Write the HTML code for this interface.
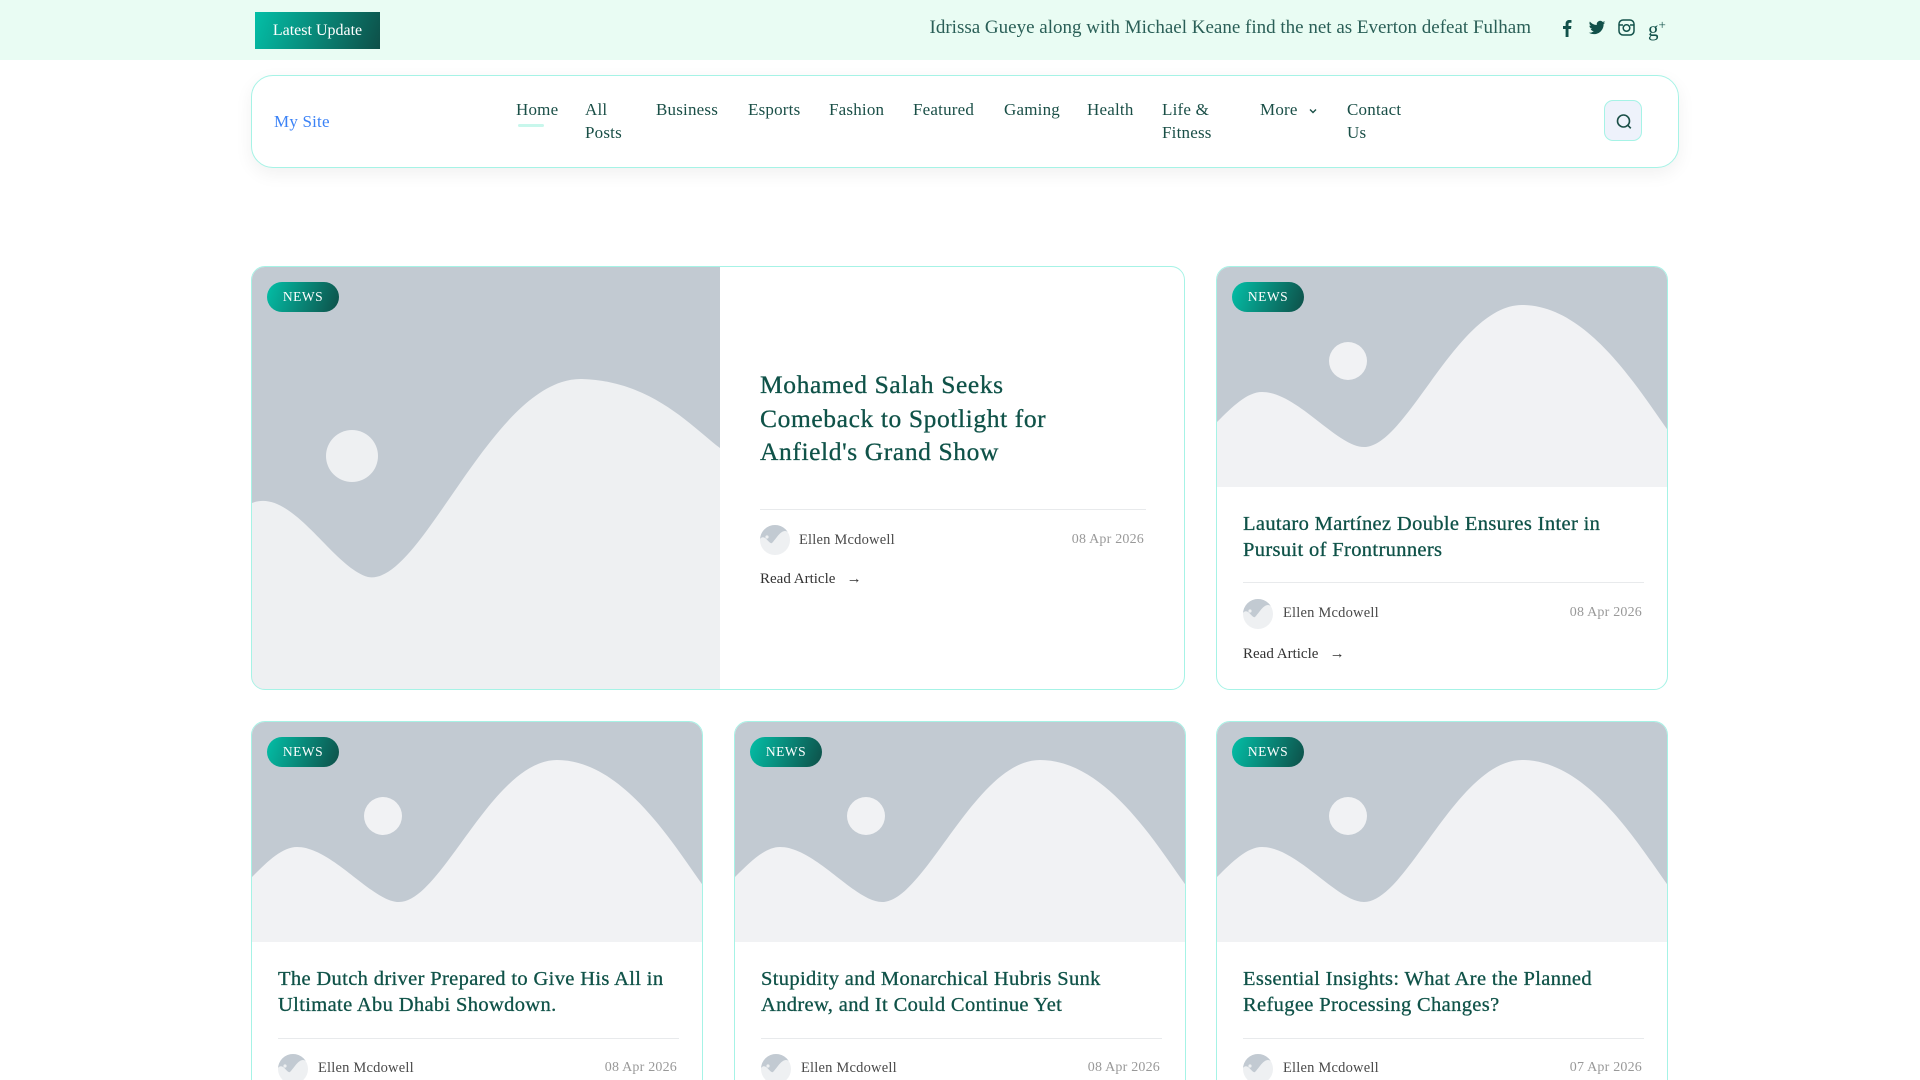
<!DOCTYPE html>
<html><head><meta charset="utf-8"><style>
*{margin:0;padding:0;box-sizing:border-box}
html,body{width:1920px;height:1080px;overflow:hidden}
body{background:#fff;font-family:"Liberation Serif",serif;color:#164e45;position:relative}
.top{position:absolute;left:0;top:0;width:1920px;height:60px;background:#e9fcf3}
.btn{position:absolute;left:255px;top:12px;width:125px;height:37px;background:linear-gradient(110deg,#03bfa7,#0e4f48);color:#fff;font-size:16px;line-height:37px;text-align:center}
.tick{position:absolute;right:389px;top:17px;font-size:19px;color:#2a5f57;white-space:nowrap}
.soc{position:absolute;top:19px}
.nav{position:absolute;left:251px;top:75px;width:1428px;height:93px;border:1.5px solid #a6f3e6;border-radius:22px;background:#fff;box-shadow:0 6px 18px rgba(0,0,0,.06)}
.nav a{position:absolute;font-size:17px;color:#1a4f47;line-height:23px;text-decoration:none;letter-spacing:.2px}
.logo{color:#3b82f6!important}
.srch{position:absolute;left:1352px;top:24px;width:38px;height:41px;border:1px solid #a6f3e6;border-radius:9px;background:#eef2fb}
.card{position:absolute;border:1.5px solid #a6f3e6;border-radius:14px;overflow:hidden;background:#fff}
.card svg.im{display:block}
.badge{position:absolute;left:15px;top:15px;width:72px;height:30px;border-radius:15px;background:linear-gradient(110deg,#03bfa7,#0e4f48);color:#fff;font-size:13.5px;letter-spacing:.5px;line-height:30px;text-align:center}
.t{position:absolute;color:#0f5248;font-size:20.5px;line-height:26px;letter-spacing:.35px;-webkit-text-stroke:.3px #0f5248}
.hr{position:absolute;height:1px;background:#e8eaec}
.av{position:absolute;width:30px;height:30px;border-radius:50%;overflow:hidden}
.au{position:absolute;font-size:14.5px;color:#4a4a4a;letter-spacing:.2px}
.dt{position:absolute;font-size:14px;color:#999;letter-spacing:.2px}
.ra{position:absolute;font-size:15px;color:#333}
</style></head><body>
<div class="top">
<div class="btn">Latest Update</div>
<div class="tick">Idrissa Gueye along with Michael Keane find the net as Everton defeat Fulham</div>
<svg class="soc" style="left:1561px" width="12" height="18" viewBox="0 0 12 18"><path d="M7.5 18V10h2.5l.4-3H7.5V5.2c0-.9.3-1.4 1.5-1.4h1.5V1.1C10.2 1 9.3 1 8.3 1 6.1 1 4.6 2.3 4.6 4.8V7H2v3h2.6v8z" fill="#12514a"/></svg>
<svg class="soc" style="left:1588px" width="18" height="18" viewBox="0 0 24 24"><path d="M23 4.6c-.8.4-1.7.6-2.6.7.9-.6 1.6-1.4 2-2.5-.9.5-1.9.9-2.9 1.1a4.5 4.5 0 0 0-7.7 4.1C8 7.8 4.7 6 2.5 3.3a4.5 4.5 0 0 0 1.4 6c-.7 0-1.4-.2-2-.6 0 2.2 1.5 4 3.6 4.4-.7.2-1.4.2-2 .1.6 1.8 2.2 3.1 4.2 3.1A9 9 0 0 1 1 18.2c2 1.3 4.4 2 6.9 2 8.3 0 12.9-6.9 12.9-12.9v-.6c.9-.6 1.6-1.4 2.2-2.1z" fill="#12514a"/></svg>
<svg class="soc" style="left:1618px" width="17" height="17" viewBox="0 0 17 17" fill="none" stroke="#12514a" stroke-width="1.5"><rect x="1" y="1" width="15" height="15" rx="4"/><circle cx="8.5" cy="9" r="3.3"/><path d="M1 6h4M12 6h4"/></svg>
<div class="soc" style="left:1648px;top:13px;font-size:21px;color:#12514a;line-height:24px">g<span style="font-size:13px;vertical-align:7px">+</span></div>
</div>

<div class="nav">
<a class="logo" style="left:22px;top:34px">My Site</a>
<a style="left:264px;top:22px">Home</a>
<div style="position:absolute;left:266px;top:48px;width:26px;height:3px;background:#c8f7ec;border-radius:2px"></div>
<a style="left:333px;top:22px">All<br>Posts</a>
<a style="left:404px;top:22px">Business</a>
<a style="left:496px;top:22px">Esports</a>
<a style="left:577px;top:22px">Fashion</a>
<a style="left:661px;top:22px">Featured</a>
<a style="left:752px;top:22px">Gaming</a>
<a style="left:835px;top:22px">Health</a>
<a style="left:910px;top:22px">Life &amp;<br>Fitness</a>
<a style="left:1008px;top:22px">More</a>
<svg style="position:absolute;left:1056px;top:31px" width="10" height="8" viewBox="0 0 10 8" fill="none" stroke="#1a4f47" stroke-width="1.4"><path d="M2 2.5l3 3 3-3"/></svg>
<a style="left:1095px;top:22px">Contact<br>Us</a>
<div class="srch"><svg width="38" height="41" viewBox="0 0 38 41" fill="none" stroke="#1a4f47" stroke-width="1.6"><circle cx="18.5" cy="20" r="6"/><path d="M22.8 24.3l3 3"/></svg></div>
</div>

<div class="card" style="left:251px;top:266px;width:934px;height:424px">
<svg class="im" width="468" height="424" viewBox="0 0 468 424"><rect width="468" height="424" fill="#c2cad2"/><path d="M0 236C40 220 80 300 116 310C170 320 240 110 330 112C400 114 440 160 468 181V424H0z" fill="#eef0f2"/><circle cx="100" cy="189" r="26" fill="#eef0f2"/></svg>
<div class="badge">NEWS</div>
<div class="t" style="left:508px;top:101px;font-size:25.5px;line-height:33.5px;width:360px;letter-spacing:.6px">Mohamed Salah Seeks Comeback to Spotlight for Anfield's Grand Show</div>
<div class="hr" style="left:508px;top:242px;width:386px"></div>
<svg class="av" style="left:508px;top:258px" viewBox="0 0 30 30"><rect width="30" height="30" fill="#eef0f2"/><path d="M0 14C5 8 9 20 12 18C16 14 20 6 25 6C28 6 30 9 30 11V0H0z" fill="#c2cad2"/><circle cx="7" cy="12" r="1.6" fill="#eef0f2"/></svg>
<div class="au" style="left:547px;top:265px">Ellen Mcdowell</div>
<div class="dt" style="right:40px;top:265px">08 Apr 2026</div>
<div class="ra" style="left:508px;top:304px">Read Article &nbsp;&nbsp;&rarr;</div>
</div>

<div class="card" style="left:1216px;top:266px;width:452px;height:424px">
<svg class="im" width="452" height="220" viewBox="0 0 452 220"><rect width="452" height="220" fill="#c2cad2"/><path d="M0 155C15 140 30 125 45 125C80 125 120 180 147 180C190 180 240 38 305 38C370 38 420 120 452 165V220H0z" fill="#f1f2f4"/><circle cx="131" cy="94" r="19" fill="#f1f2f4"/></svg>
<div class="badge">NEWS</div>
<div class="t" style="left:26px;top:244px;width:395px">Lautaro Martínez Double Ensures Inter in Pursuit of Frontrunners</div>
<div class="hr" style="left:26px;top:315px;width:401px"></div>
<svg class="av" style="left:26px;top:332px" viewBox="0 0 30 30"><rect width="30" height="30" fill="#eef0f2"/><path d="M0 14C5 8 9 20 12 18C16 14 20 6 25 6C28 6 30 9 30 11V0H0z" fill="#c2cad2"/><circle cx="7" cy="12" r="1.6" fill="#eef0f2"/></svg>
<div class="au" style="left:66px;top:338px">Ellen Mcdowell</div>
<div class="dt" style="right:25px;top:338px">08 Apr 2026</div>
<div class="ra" style="left:26px;top:379px">Read Article &nbsp;&nbsp;&rarr;</div>
</div>

<div class="card" style="left:251px;top:721px;width:452px;height:400px">
<svg class="im" width="452" height="220" viewBox="0 0 452 220"><rect width="452" height="220" fill="#c2cad2"/><path d="M0 155C15 140 30 125 45 125C80 125 120 180 147 180C190 180 240 38 305 38C370 38 420 120 452 165V220H0z" fill="#f1f2f4"/><circle cx="131" cy="94" r="19" fill="#f1f2f4"/></svg>
<div class="badge">NEWS</div>
<div class="t" style="left:26px;top:244px;width:395px">The Dutch driver Prepared to Give His All in Ultimate Abu Dhabi Showdown.</div>
<div class="hr" style="left:26px;top:316px;width:401px"></div>
<svg class="av" style="left:26px;top:332px" viewBox="0 0 30 30"><rect width="30" height="30" fill="#eef0f2"/><path d="M0 14C5 8 9 20 12 18C16 14 20 6 25 6C28 6 30 9 30 11V0H0z" fill="#c2cad2"/><circle cx="7" cy="12" r="1.6" fill="#eef0f2"/></svg>
<div class="au" style="left:66px;top:338px">Ellen Mcdowell</div>
<div class="dt" style="right:25px;top:338px">08 Apr 2026</div>
</div>

<div class="card" style="left:734px;top:721px;width:452px;height:400px">
<svg class="im" width="452" height="220" viewBox="0 0 452 220"><rect width="452" height="220" fill="#c2cad2"/><path d="M0 155C15 140 30 125 45 125C80 125 120 180 147 180C190 180 240 38 305 38C370 38 420 120 452 165V220H0z" fill="#f1f2f4"/><circle cx="131" cy="94" r="19" fill="#f1f2f4"/></svg>
<div class="badge">NEWS</div>
<div class="t" style="left:26px;top:244px;width:395px">Stupidity and Monarchical Hubris Sunk Andrew, and It Could Continue Yet</div>
<div class="hr" style="left:26px;top:316px;width:401px"></div>
<svg class="av" style="left:26px;top:332px" viewBox="0 0 30 30"><rect width="30" height="30" fill="#eef0f2"/><path d="M0 14C5 8 9 20 12 18C16 14 20 6 25 6C28 6 30 9 30 11V0H0z" fill="#c2cad2"/><circle cx="7" cy="12" r="1.6" fill="#eef0f2"/></svg>
<div class="au" style="left:66px;top:338px">Ellen Mcdowell</div>
<div class="dt" style="right:25px;top:338px">08 Apr 2026</div>
</div>

<div class="card" style="left:1216px;top:721px;width:452px;height:400px">
<svg class="im" width="452" height="220" viewBox="0 0 452 220"><rect width="452" height="220" fill="#c2cad2"/><path d="M0 155C15 140 30 125 45 125C80 125 120 180 147 180C190 180 240 38 305 38C370 38 420 120 452 165V220H0z" fill="#f1f2f4"/><circle cx="131" cy="94" r="19" fill="#f1f2f4"/></svg>
<div class="badge">NEWS</div>
<div class="t" style="left:26px;top:244px;width:395px">Essential Insights: What Are the Planned Refugee Processing Changes?</div>
<div class="hr" style="left:26px;top:316px;width:401px"></div>
<svg class="av" style="left:26px;top:332px" viewBox="0 0 30 30"><rect width="30" height="30" fill="#eef0f2"/><path d="M0 14C5 8 9 20 12 18C16 14 20 6 25 6C28 6 30 9 30 11V0H0z" fill="#c2cad2"/><circle cx="7" cy="12" r="1.6" fill="#eef0f2"/></svg>
<div class="au" style="left:66px;top:338px">Ellen Mcdowell</div>
<div class="dt" style="right:25px;top:338px">07 Apr 2026</div>
</div>
</body></html>
